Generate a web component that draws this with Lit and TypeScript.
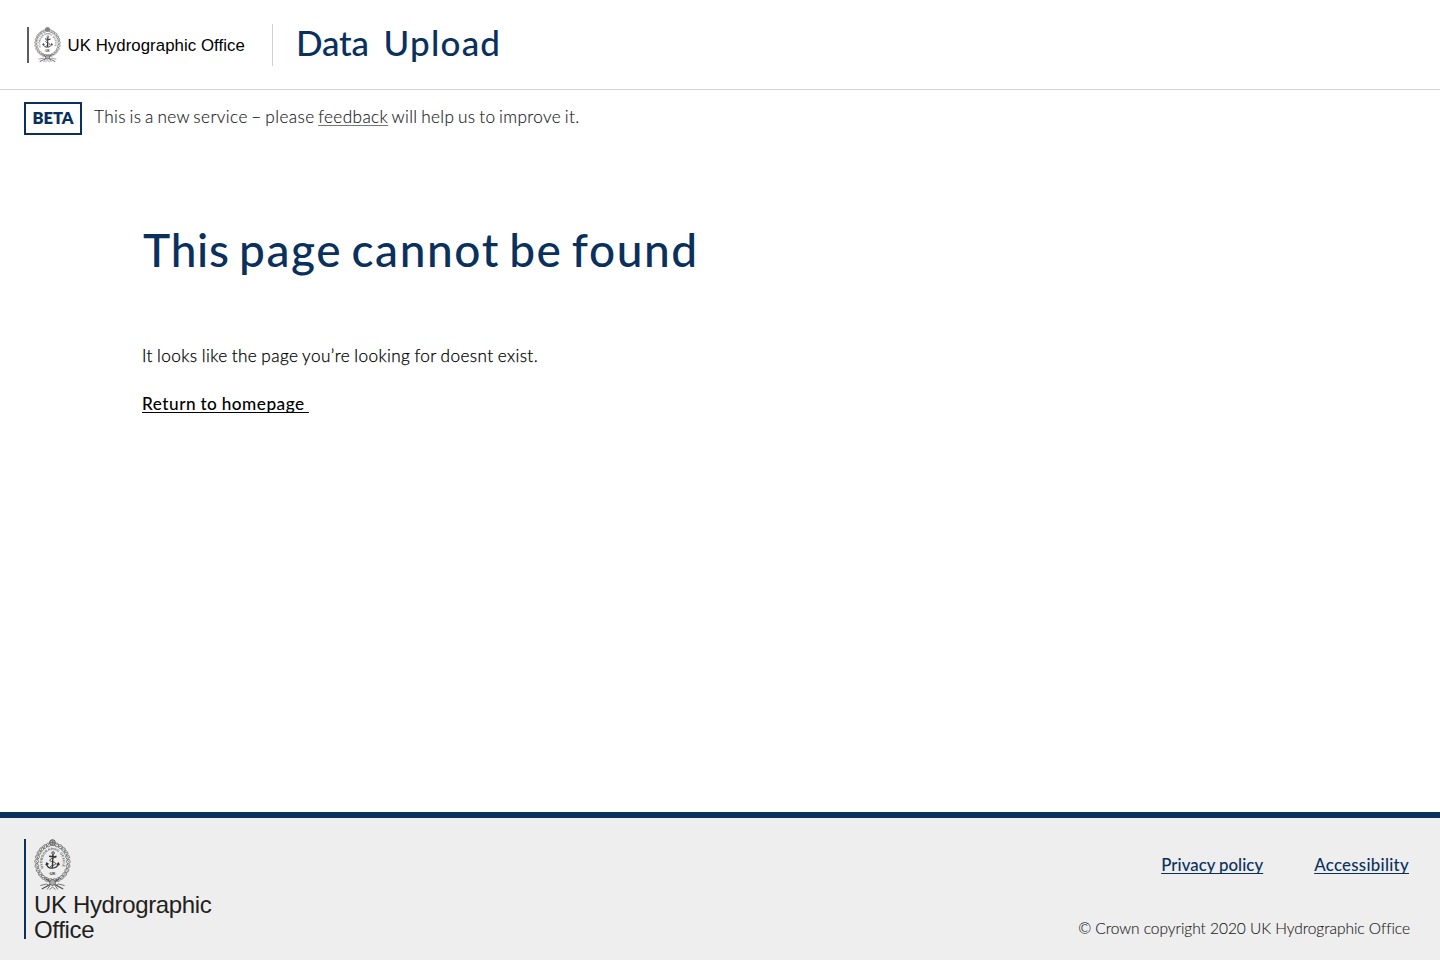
import { LitElement, html, css, svg } from "lit";
import { customElement } from "lit/decorators.js";

const point = (r: number, ry: number, deg: number) => {
  const a = (deg * Math.PI) / 180;
  return [19 + r * Math.sin(a), 23.5 - ry * Math.cos(a)];
};

@customElement("admiralty-emblem")
class AdmiraltyEmblem extends LitElement {
  static styles = css`
    :host { display: block; color: #555; }
    svg { display: block; width: 100%; height: 100%; overflow: visible; }
    .ring { font: 700 3.5px "Liberation Sans", sans-serif; fill: #555; stroke: none; }
    .initials { font: 700 4px "Liberation Sans", sans-serif; fill: #333; stroke: none; }
  `;

  render() {
    const leaves = Array.from({ length: 24 }, (_, i) => {
      const deg = 15 + (i * 330) / 23;
      const [x, y] = point(16.3, 18.2, deg);
      return svg`<g transform="rotate(${deg} ${x} ${y})">
        <ellipse cx=${x} cy=${y} rx="2.1" ry="1.9" />
        <path d="M${x - 1.5} ${y + 1}l2.400-2" />
      </g>`;
    });
    return html`
      <svg viewBox="0 0 38 52" preserveAspectRatio="none" fill="none" stroke="currentColor" aria-hidden="true">
        <g stroke-width=".65">${leaves}</g>
        <path id="arc" d="M9.700 29A10.400 12.400 0 1 1 28.300 29" stroke="none" />
        <text class="ring"><textPath href="#arc" textLength="45">HYDROGRAPHIC OFFICE</textPath></text>
        <circle cx="19" cy="3.600" r="2.900" fill="#aaa" stroke-width="1" />
        <path d="M16.500 3.600h5M19 1.500v4.200" stroke-width=".6" />
        <g stroke="#333">
          <circle cx="19.600" cy="14" r="1.300" stroke-width=".9" />
          <path d="M19.500 15.300l-.6 13.500M15.500 17.200l7.500.8" stroke-width="1.400" />
          <path d="M13 24.500c.5 3.800 3.200 4.900 6 4.600 3.200-.1 5.200-1.700 6.100-4.500M12.200 26.300l.9-2.200 1.800 1.200M23.300 25.500l1.900-1.500.7 2.200" stroke-width="1.300" />
          <path d="M22.500 16.500c2 1.800-5.500 2.500-6.300 4.500s6.500 1.500 6 3.700-4.500 1.300-5.500 3" stroke-width=".9" />
        </g>
        <text class="initials" x="19" y="35.600" text-anchor="middle">·UK·</text>
        <path d="M12 39.500C16 43 22 46 30 50M26 39.500C22 43 16 46 8 50" stroke-width="1.300" />
        <circle cx="19" cy="43.500" r="3" fill="#aaa" stroke-width=".8" />
        <path d="M6.500 46.500l6.500-1.500 3 2-2.500 3.500M31.500 46.500l-6.500-1.500-3 2 2.500 3.500M16 50.500l3-2.500 3 2.500" stroke-width=".8" />
      </svg>
    `;
  }
}

@customElement("app-root")
class AppRoot extends LitElement {
  static styles = css`
    :host {
      display: flex; flex-direction: column; height: 960px; box-sizing: border-box;
      background: #fff; color: #0b0c0c;
      font-family: Lato, "Open Sans", sans-serif; font-size: 17.2px; white-space: nowrap;
    }
    h1, p { margin: 0; font-weight: 400; }
    header { display: flex; height: 89px; border-bottom: 1px solid #d3d4d5; }
    .brand { display: flex; margin: 27px 0 0 27px; width: 245px; height: 36px; }
    .rule { width: 2px; height: 36px; background: #5c5c5c; margin-right: 5px; }
    .brand admiralty-emblem { width: 27px; height: 36px; }
    .brand-name {
      margin-left: 6.5px; font: 16.8px/38px "Liberation Sans", sans-serif; color: #000;
      letter-spacing: 0.06px;
    }
    .divider { width: 1px; height: 42px; margin-top: 24px; background: #d0d1d3; }
    .product {
      margin: 23px 0 0 23px; font-size: 35px; line-height: 39px; font-weight: 500;
      color: #0a315e; letter-spacing: 1.2px; word-spacing: 4.8px;
    }
    .product .tight { letter-spacing: -0.2px; }
    .banner { display: flex; padding: 12px 24px 0; height: 33px; }
    .tag {
      box-sizing: border-box; width: 58px; height: 33px; border: 2px solid #0a315e;
      text-align: center; font-size: 16.5px; line-height: 28px; font-weight: 800; color: #0a315e;
    }
    .notice {
      margin-left: 12px; line-height: 30px; font-weight: 300; color: #1c1c1c; letter-spacing: 0.38px;
      word-spacing: -1.4px; -webkit-text-stroke: 0.15px #1c1c1c;
    }
    .link {
      color: inherit; text-decoration: underline; text-decoration-thickness: 1px;
      text-decoration-skip-ink: none; text-underline-offset: 2px;
    }
    .notice .link { text-decoration-color: #777; }
    main { flex: 1; padding: 88px 142px 0; }
    main h1 {
      font-size: 46px; line-height: 54px; font-weight: 500; color: #0a315e;
      letter-spacing: 1.6px; word-spacing: -4px; padding-left: 1px;
    }
    main h1 .tight { letter-spacing: 0.75px; }
    .message {
      margin-top: 67px; line-height: 24px; font-weight: 300; color: #000; letter-spacing: 0.4px;
      word-spacing: -0.9px; -webkit-text-stroke: 0.25px #000;
    }
    .home {
      margin-top: 24px; line-height: 23px; font-weight: 500; color: #000; letter-spacing: 0.5px;
      word-spacing: -0.5px;
    }
    .home .link { white-space: pre; }
    footer {
      box-sizing: border-box; height: 148px; border-top: 6px solid #0a315e; background: #eee;
      display: flex; justify-content: space-between; padding: 21px 30px 0 24px;
    }
    .foot-brand { box-sizing: border-box; height: 100px; border-left: 2px solid #0a315e; padding-left: 8px; }
    .foot-brand admiralty-emblem { width: 37px; height: 52px; }
    .foot-name { font: 24px/25px "Liberation Sans", sans-serif; color: #231f20; margin-top: 1px; letter-spacing: -0.35px; }
    .foot-side { display: flex; flex-direction: column; align-items: flex-end; }
    nav {
      display: flex; gap: 51px; margin-top: 14px; padding-right: 1px; color: #0a315e;
      font-size: 16.8px; line-height: 23px; font-weight: 500; letter-spacing: 0.3px;
    }
    .policy { letter-spacing: 0.08px; word-spacing: -0.6px; }
    .copyright {
      margin-top: 41px; font-size: 15.5px; line-height: 23px; font-weight: 300; color: #1c1c1c;
      letter-spacing: -0.04px; -webkit-text-stroke: 0.12px #1c1c1c;
    }
  `;

  render() {
    return html`
      <header>
        <div class="brand">
          <span class="rule"></span>
          <admiralty-emblem></admiralty-emblem>
          <span class="brand-name">UK Hydrographic Office</span>
        </div>
        <span class="divider"></span>
        <div class="product"><span class="tight">Data</span> Upload</div>
      </header>
      <div class="banner">
        <span class="tag">BETA</span>
        <p class="notice">This is a new service – please <a class="link" href="#">feedback</a> will help us to improve it.</p>
      </div>
      <main>
        <h1><span class="tight">This</span> page cannot be found</h1>
        <p class="message">It looks like the page you’re looking for doesnt exist.</p>
        <p class="home"><a class="link" href="#">Return to homepage </a></p>
      </main>
      <footer>
        <div class="foot-brand">
          <admiralty-emblem></admiralty-emblem>
          <div class="foot-name">UK Hydrographic<br />Office</div>
        </div>
        <div class="foot-side">
          <nav>
            <a class="link policy" href="#">Privacy policy</a>
            <a class="link" href="#">Accessibility</a>
          </nav>
          <p class="copyright">© Crown copyright 2020 UK Hydrographic Office</p>
        </div>
      </footer>
    `;
  }
}
